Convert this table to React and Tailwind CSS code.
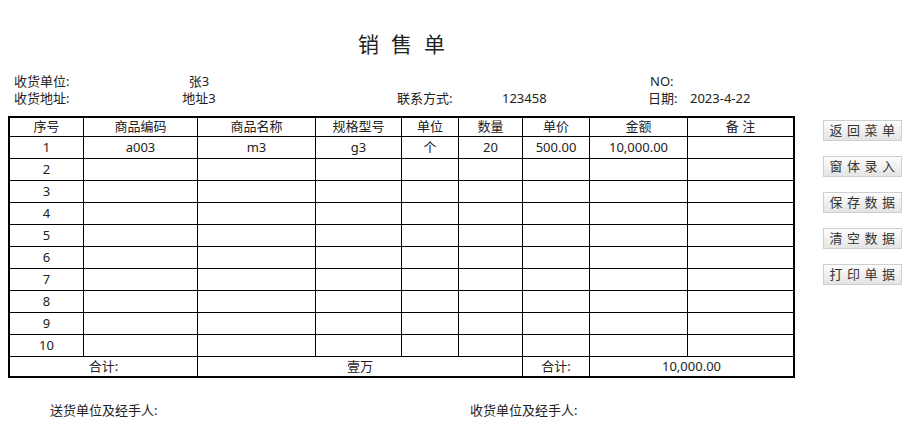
import React from "react";

const COLS = [
  "w-[74px] border-r",
  "w-[114px] border-r",
  "w-[118px] border-r",
  "w-[86px] border-r",
  "w-[57px] border-r",
  "w-[64px] border-r",
  "w-[67px] border-r",
  "w-[98px] border-r",
  "w-[105px]",
];

const HEAD = ["序号", "商品编码", "商品名称", "规格型号", "单位", "数量", "单价", "金额", "备 注"];

const ROWS = [
  ["1", "a003", "m3", "g3", "个", "20", "500.00", "10,000.00", ""],
  ["2", "", "", "", "", "", "", "", ""],
  ["3", "", "", "", "", "", "", "", ""],
  ["4", "", "", "", "", "", "", "", ""],
  ["5", "", "", "", "", "", "", "", ""],
  ["6", "", "", "", "", "", "", "", ""],
  ["7", "", "", "", "", "", "", "", ""],
  ["8", "", "", "", "", "", "", "", ""],
  ["9", "", "", "", "", "", "", "", ""],
  ["10", "", "", "", "", "", "", "", ""],
];

const BUTTONS = ["返回菜单", "窗体录入", "保存数据", "清空数据", "打印单据"];

const font = { fontFamily: '"Noto Sans", "Noto Sans CJK SC", sans-serif' };

export default function App() {
  return (
    <div
      className="w-[924px] h-[434px] bg-white text-[#222] text-[13px] flex overflow-hidden"
      style={font}
    >
      <div className="w-[815px] pl-[8px] flex flex-col">
        <div className="mt-[30px] h-[28px] leading-[28px] text-[21px] text-center tracking-[12px] pl-[12px] w-[787px]">
          销售单
        </div>
        <div className="mt-[15px] h-[17px] leading-[17px] flex pl-[6px]">
          <span className="w-[120px]">收货单位:</span>
          <span className="w-[130px] text-center">张3</span>
          <span className="w-[386px]"></span>
          <span>NO:</span>
        </div>
        <div className="h-[17px] leading-[17px] flex pl-[6px]">
          <span className="w-[120px]">收货地址:</span>
          <span className="w-[130px] text-center">地址3</span>
          <span className="w-[133px]"></span>
          <span className="w-[105px]">联系方式:</span>
          <span className="w-[146px]">123458</span>
          <span className="w-[42px]">日期:</span>
          <span>2023-4-22</span>
        </div>
        <div className="mt-[9px] w-[787px] border-2 border-black flex flex-col">
          <div className="h-[19px] flex border-b border-black">
            {HEAD.map((h, i) => (
              <div
                key={i}
                className={`${COLS[i]} border-black h-full flex items-center justify-center`}
              >
                {h}
              </div>
            ))}
          </div>
          {ROWS.map((r, ri) => (
            <div key={ri} className="h-[22px] flex border-b border-black">
              {r.map((c, i) => (
                <div
                  key={i}
                  className={`${COLS[i]} border-black h-full flex items-center justify-center`}
                >
                  {c}
                </div>
              ))}
            </div>
          ))}
          <div className="h-[19px] flex">
            <div className="w-[188px] border-r border-black h-full flex items-center justify-center">
              合计:
            </div>
            <div className="w-[325px] border-r border-black h-full flex items-center justify-center">
              壹万
            </div>
            <div className="w-[67px] border-r border-black h-full flex items-center justify-center">
              合计:
            </div>
            <div className="w-[203px] h-full flex items-center justify-center">10,000.00</div>
          </div>
        </div>
        <div className="mt-[24px] h-[17px] leading-[17px] flex pl-[42px]">
          <span className="w-[420px]">送货单位及经手人:</span>
          <span>收货单位及经手人:</span>
        </div>
      </div>
      <div className="pl-[8px] pt-[120px] flex flex-col gap-[15px]">
        {BUTTONS.map((b) => (
          <div
            key={b}
            className="w-[79px] h-[21px] border border-[#cfcfcf] bg-linear-to-b from-[#fdfdfd] to-[#e4e4e4] text-[#333] text-[13px] leading-[19px] text-center tracking-[4.5px] pl-[4px]"
          >
            {b}
          </div>
        ))}
      </div>
    </div>
  );
}
